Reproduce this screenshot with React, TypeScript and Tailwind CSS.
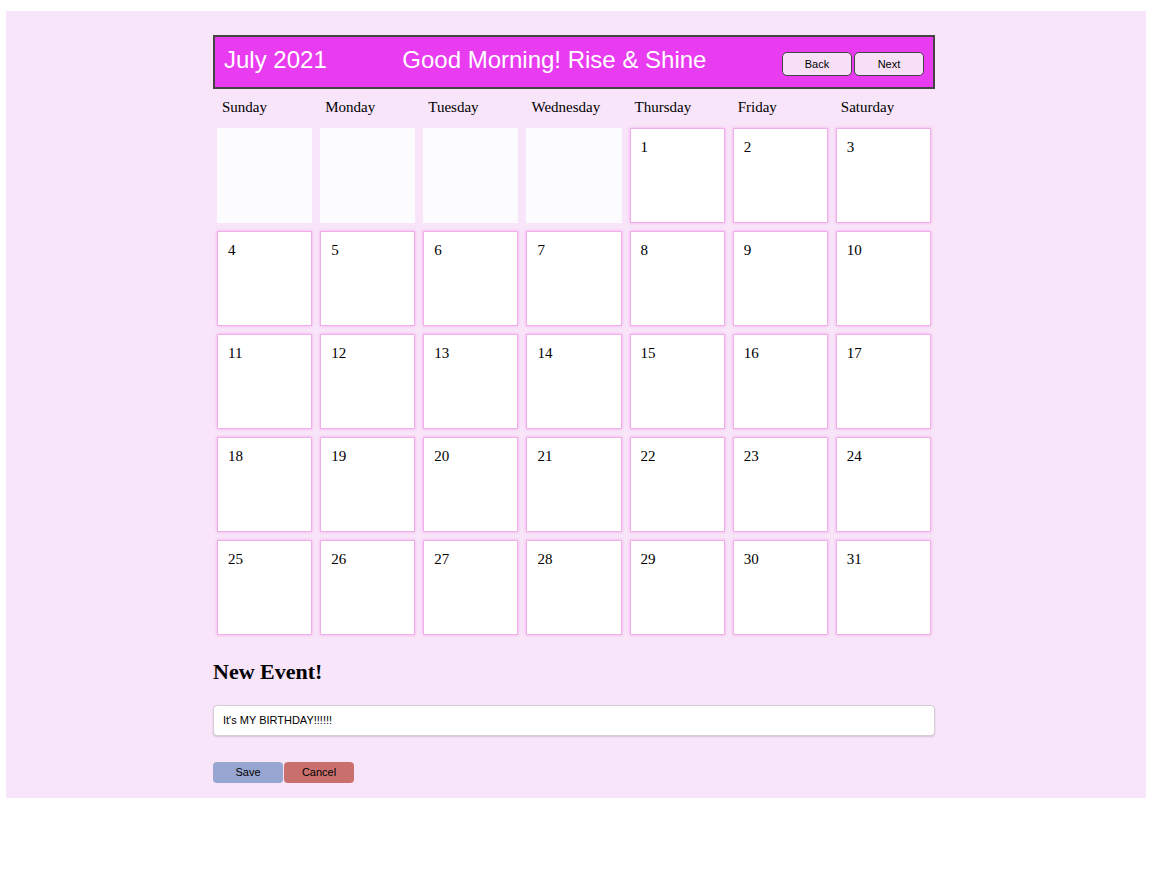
import React from "react";

const days = ["Sunday", "Monday", "Tuesday", "Wednesday", "Thursday", "Friday", "Saturday"];

export default function App() {
  const cells: (number | null)[] = [null, null, null, null];
  for (let i = 1; i <= 31; i++) cells.push(i);

  return (
    <div className="w-[1156px] h-[872px] bg-white pt-[11px] pl-[6px]">
      <div className="w-[1140px] h-[787px] bg-[#f8e5f9] pt-[24px] pl-[207px]">
        <div className="w-[722px]">
          <div
            className="h-[54px] border-2 border-[#444444] bg-[#e93cf0] flex items-center justify-between pl-[9px] pr-[9px] text-white text-[24px]"
            style={{ fontFamily: '"Liberation Sans", Arial, sans-serif' }}
          >
            <span className="pb-[4px]">July 2021</span>
            <span className="pb-[4px]">Good Morning! Rise &amp; Shine</span>
            <div className="flex gap-[2px] pt-[4px]">
              <button className="w-[70px] h-[24px] rounded-[5px] border-[1.5px] border-[#444444] bg-[#f7e0f6] text-[11px] text-black">
                Back
              </button>
              <button className="w-[70px] h-[24px] rounded-[5px] border-[1.5px] border-[#444444] bg-[#f7e0f6] text-[11px] text-black">
                Next
              </button>
            </div>
          </div>

          <div
            className="grid grid-cols-7 h-[35px] items-center text-[15px] text-black pt-[2px]"
            style={{ fontFamily: '"Liberation Serif", "Times New Roman", serif' }}
          >
            {days.map((d) => (
              <div key={d} className="pl-[9px]">
                {d}
              </div>
            ))}
          </div>

          <div
            className="grid grid-cols-7 text-[15px] text-black"
            style={{ fontFamily: '"Liberation Serif", "Times New Roman", serif' }}
          >
            {cells.map((c, i) =>
              c === null ? (
                <div key={i} className="m-1 h-[95px] bg-[#fcfcff]" />
              ) : (
                <div
                  key={i}
                  className="m-1 h-[95px] bg-white border border-[#f2aee8] shadow-[0_0_3px_#f3a8ea] pl-[10px] pt-[7px]"
                >
                  {c}
                </div>
              )
            )}
          </div>

          <h2
            className="mt-[19px] text-[22px] font-bold text-black leading-[28px]"
            style={{ fontFamily: '"Liberation Serif", "Times New Roman", serif' }}
          >
            New Event!
          </h2>

          <div
            className="mt-[19px] h-[31px] bg-white rounded-[4px] border border-[#d6cbd6] shadow-[0_1px_2px_rgba(0,0,0,0.15)] flex items-center pl-[9px] text-[11px] text-black"
            style={{ fontFamily: '"Liberation Sans", Arial, sans-serif' }}
          >
            It's MY BIRTHDAY!!!!!!
          </div>

          <div
            className="mt-[26px] flex text-[11px] text-black"
            style={{ fontFamily: '"Liberation Sans", Arial, sans-serif' }}
          >
            <button className="w-[70px] h-[21px] rounded-[4px] bg-[#97a6d0]">Save</button>
            <button className="w-[70px] h-[21px] rounded-[4px] bg-[#c9706e] ml-[1px]">Cancel</button>
          </div>
        </div>
      </div>
    </div>
  );
}
